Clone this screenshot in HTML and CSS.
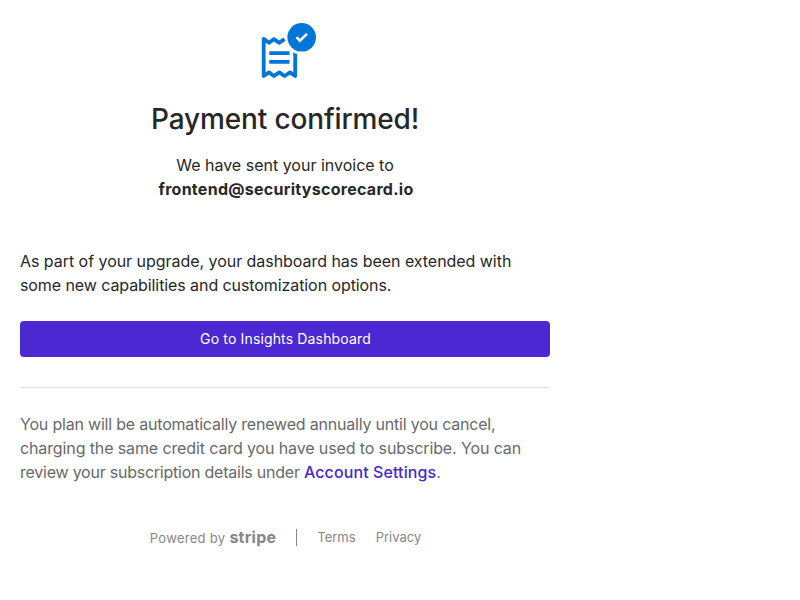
FILE: index.html
```html
<!DOCTYPE html>
<html lang="en">
<head>
<meta charset="utf-8">
<title>Payment confirmed</title>
<link rel="stylesheet" href="styles.css">
</head>
<body>
<main class="panel">
  <header class="intro">
    <svg class="icon" width="56" height="56" viewBox="0 0 56 56" fill="none">
      <path d="M24.500 16.200L19 19.800L14 16.100L9 19.800L3.700 15.900V53L9 49.400L14 53L19.300 49.400L24.500 53L30 49.400L35.200 53V31.200" stroke="#0275d8" stroke-width="3.800" stroke-linejoin="round"/>
      <path d="M33.300 29.200Q35.200 30.700 37.100 30.700V33H33.300Z" fill="#0275d8"/>
      <path d="M9.300 30.200H29.500M9.300 38.900H29.500" stroke="#0275d8" stroke-width="3.700"/>
      <circle cx="41.700" cy="14.300" r="14.300" fill="#0275d8"/>
      <path d="M36.500 14.300L39.900 17.600L47 10.900" stroke="#fff" stroke-width="2.600"/>
    </svg>
    <h1 class="title">Payment confirmed!</h1>
    <p class="sent">We have sent your invoice to<br><strong class="email">frontend@securityscorecard.io</strong></p>
  </header>
  <p class="upgrade"><span class="upgrade-lead">As part of your upgrade, your dashboard has been extended with</span><br>some new capabilities and customization options.</p>
  <button class="button">Go to Insights Dashboard</button>
  <hr class="divider">
  <p class="renewal">You plan will be automatically renewed annually until you cancel,<br><span class="charging">charging the same credit card you have used to subscribe. You can</span><br><span class="review">review your subscription details under </span><a class="link">Account Settings</a>.</p>
  <footer class="footer">
    <span class="powered">Powered by <strong class="stripe">stripe</strong></span>
    <span class="bar"></span>
    <a class="terms">Terms</a>
    <a class="privacy">Privacy</a>
  </footer>
</main>
</body>
</html>
```
FILE: styles.css
```css
body { margin: 0; background: #fff; color: #272727; font: 16px/24px Inter, sans-serif; }
.panel { width: 530px; padding: 23px 20px; }
.intro { text-align: center; }
.icon { display: block; margin: 0 auto; position: relative; left: 3px; }
.title { margin: 20px 0 14px; font-size: 28px; line-height: 40px; font-weight: 500; letter-spacing: -0.14px; }
p { margin: 0; }
strong { font-weight: 700; }
.email { position: relative; left: 1px; letter-spacing: 0.28px; }
.upgrade { margin-top: 48px; letter-spacing: -0.085px; }
.upgrade-lead { letter-spacing: -0.04px; }
.button { display: block; width: 100%; height: 36px; margin-top: 24px; padding: 0 0 0 1px; border: 0; border-radius: 4px; background: #4c28d3; color: #fff; font: 14px/20px Inter, sans-serif; letter-spacing: 0.15px; }
.divider { height: 1px; margin: 30px 0 24px; border: 0; background: #e0e0e0; }
.renewal { color: #696969; letter-spacing: -0.2px; white-space: nowrap; }
.charging { letter-spacing: -0.12px; }
.review { letter-spacing: -0.235px; }
.link { color: #4628cd; font-weight: 500; letter-spacing: 0.1px; }
.footer { display: flex; justify-content: center; align-items: center; margin: 41px -1px 0 0; color: #878787; font-size: 13px; }
.powered { letter-spacing: 0.3px; }
.stripe { font-size: 16px; letter-spacing: 0.25px; }
.bar { width: 1px; height: 17px; margin: 0 20px 1px; background: #878787; }
.terms, .privacy { margin-bottom: 1px; }
.terms { margin-right: 20px; }
```
